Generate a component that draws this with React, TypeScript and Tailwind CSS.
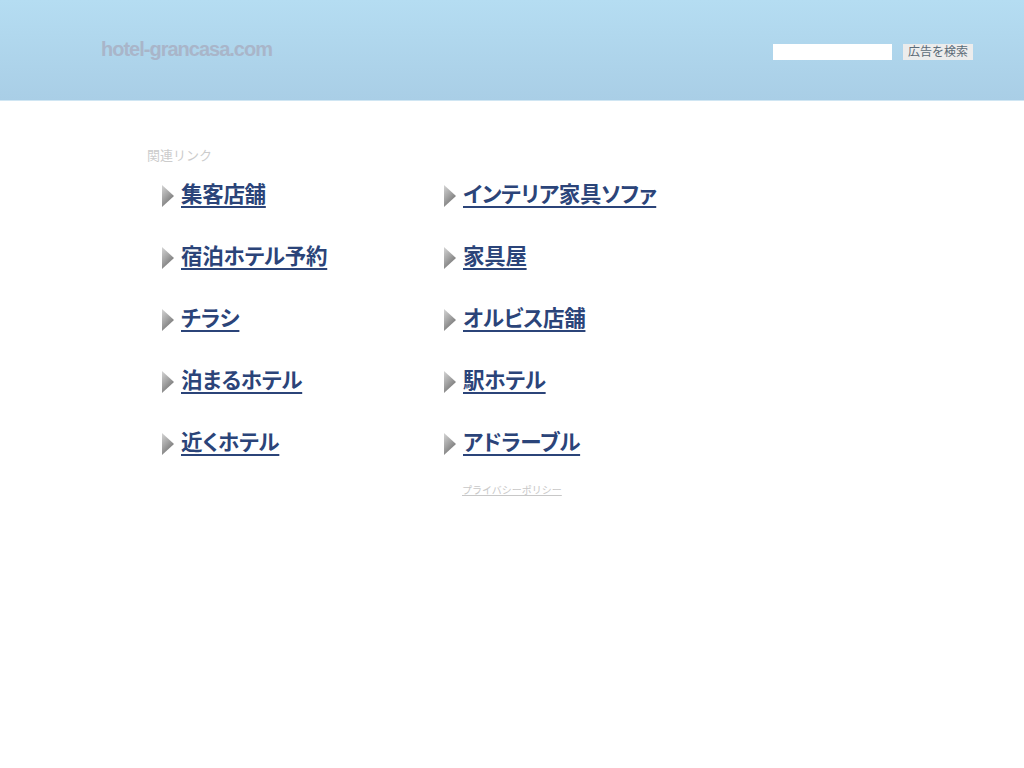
const links: [string, string][] = [
  ["集客店舗", "インテリア家具ソファ"],
  ["宿泊ホテル予約", "家具屋"],
  ["チラシ", "オルビス店舗"],
  ["泊まるホテル", "駅ホテル"],
  ["近くホテル", "アドラーブル"],
];

function Arrow() {
  return (
    <svg width="12" height="22" viewBox="0 0 12 22" className="shrink-0">
      <defs>
        <linearGradient id="arr" x1="0" y1="0" x2="0.6" y2="1">
          <stop offset="0" stopColor="#d4d4d4" />
          <stop offset="0.5" stopColor="#a5a5a5" />
          <stop offset="1" stopColor="#6f6f6f" />
        </linearGradient>
      </defs>
      <polygon points="0,0 12,11 0,22" fill="url(#arr)" />
    </svg>
  );
}

function LinkItem({ text }: { text: string }) {
  return (
    <div className="flex h-[62px] items-center gap-[7px]">
      <Arrow />
      <a
        href="#"
        className="text-[21.5px] font-bold leading-none tracking-[-0.3px] text-[#2b4479] underline decoration-2 underline-offset-[4px] [font-feature-settings:'palt']"
      >
        {text}
      </a>
    </div>
  );
}

export default function App() {
  return (
    <div
      className="min-h-[768px] w-full bg-white"
      style={{ fontFamily: '"Liberation Sans", Arial, "Noto Sans CJK JP", sans-serif' }}
    >
      <header className="flex h-[101px] items-start justify-between border-b border-[#d0e6f3] bg-gradient-to-b from-[#b5ddf2] to-[#a9cee6] pl-[101px] pr-[51px]">
        <div className="pt-[37px] text-[20px] font-bold leading-6 tracking-[-1px] text-[#a9b5c9]">
          hotel-grancasa.com
        </div>
        <div className="flex items-center gap-[11px] pt-[44px]">
          <input className="h-4 w-[119px] border-0 bg-white outline-none" />
          <button className="h-4 w-[70px] bg-[#ececec] text-[12px] leading-4 text-[#5b6b78]">
            広告を検索
          </button>
        </div>
      </header>
      <main className="pl-[147px] pt-[47px]">
        <div className="text-[13px] leading-4 text-[#cccccc]">関連リンク</div>
        <div className="grid w-[564px] grid-cols-[282px_282px] pl-[15px] pt-[1px]">
          {links.map(([a, b]) => (
            <div key={a} className="contents">
              <LinkItem text={a} />
              <LinkItem text={b} />
            </div>
          ))}
        </div>
        <div className="pl-[315px] pt-[2px]">
          <a href="#" className="text-[10px] leading-3 text-[#c8c8c8] underline">
            プライバシーポリシー
          </a>
        </div>
      </main>
    </div>
  );
}
